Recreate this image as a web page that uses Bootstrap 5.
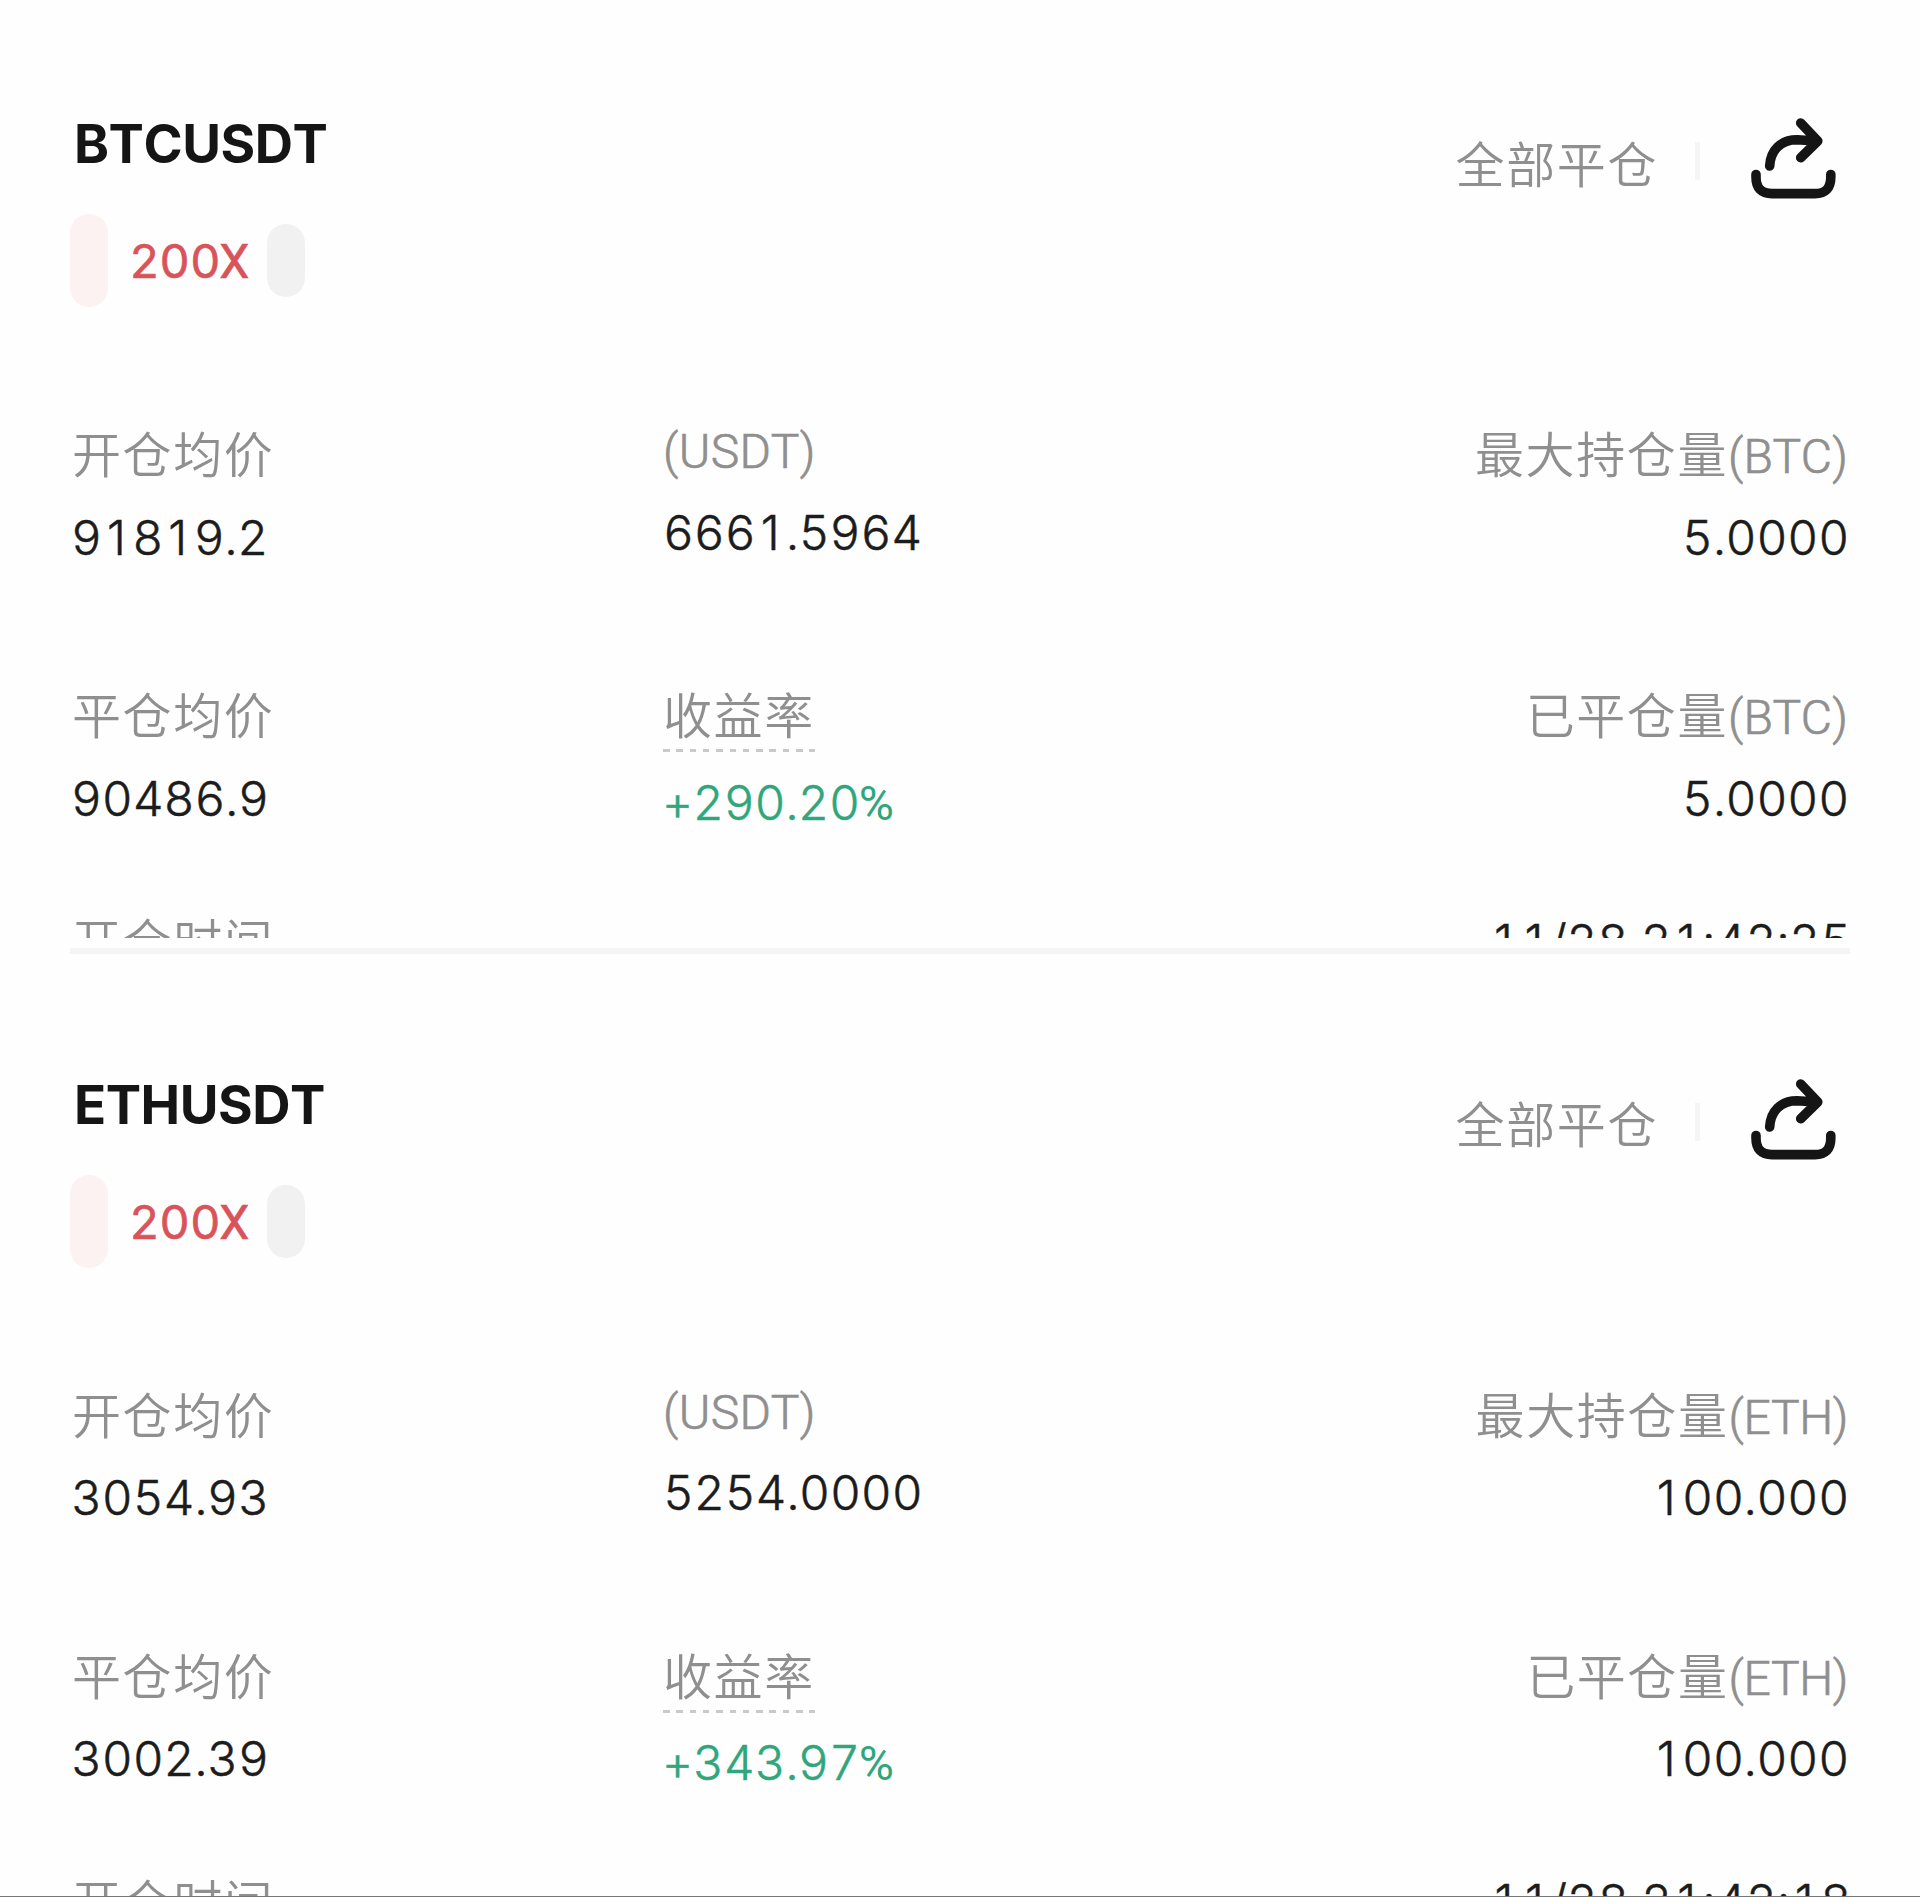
<!DOCTYPE html>
<html lang="zh-CN">
<head>
<meta charset="utf-8">
<meta name="viewport" content="width=device-width, initial-scale=1">
<title>BTCUSDT / ETHUSDT</title>
<link href="https://cdn.jsdelivr.net/npm/bootstrap@5.3.0/dist/css/bootstrap.min.css" rel="stylesheet">
<style>
body{background:#fefefe;font-family:Roboto,"Noto Sans CJK SC",sans-serif;font-size:48px;line-height:60px;color:#1c1c1c}
.screen{height:1897px;border-bottom:1px solid #777}
.position{height:960.5px;padding:0 70px}
.position-body{height:937.7px;padding-top:111px}
.head{height:309px}
.pair{font-family:Inter,sans-serif;font-size:53px;line-height:64px;font-weight:700;font-kerning:none;letter-spacing:-.5px;color:#151515;margin:1px 0 -1px 4px}
.tags{height:93px;margin-top:39px}
.pill-side{width:38px;height:93px;border-radius:19px;background:#fcf2f1}
.pill-mode{width:38px;height:73px;border-radius:19px;background:#f1f1f1}
.lever{width:158.5px;padding-left:22px;padding-top:2px;font-family:Inter,sans-serif;font-size:47px;font-weight:400;letter-spacing:1.1px;color:#d9545a;-webkit-text-stroke:.6px #d9545a}
.narrow{font-family:Roboto,sans-serif;font-size:48px;font-weight:400}
.lever .narrow{margin-left:-2px}
.cjk,.tag-label{color:#8f8f8f;font-weight:350}
.cjk{font-size:49px;letter-spacing:1.6px}
.tag-label{font-size:48px;font-weight:300;letter-spacing:.4px;-webkit-text-stroke:.7px #8f8f8f}
.cjk .tag-label{letter-spacing:.2px}
.eth .cjk .tag-label{letter-spacing:-.4px}
.head-right{padding-top:23px;height:83px}
.head-right .cjk{padding-top:5px}
.sep{width:5px;height:38px;background:#f5f5f5;margin:0 50px 6px 37px}
.share{width:88px;height:100px;margin-right:12px}
.details{height:261px;padding-top:7px}
.details-last{height:231px}
.c-left{width:593px;padding-left:2px}
.c-left .val{margin-left:-1px}
.c-mid{width:500px}
.val{margin-top:20.6px;font-family:Inter,sans-serif;font-feature-settings:"tnum" 1;font-weight:300;letter-spacing:-.2px;-webkit-text-stroke:.5px currentColor}
/* footless one, kept on the tabular pitch */
.one{display:inline-block;width:29px;margin-right:1.5px;text-align:center;font-feature-settings:"tnum" 0}
.c-right{margin-right:2px}
.c-right .val,.c-right.val{margin-right:-1px}
.dashed{width:152px;height:3px;margin-top:1.2px;background:repeating-linear-gradient(90deg,#c9c9c9 0 6.5px,transparent 6.5px 13.3px)}
.up{color:#2fa67b;margin-top:20.6px;margin-left:-1px}
.up .narrow{margin-left:-1px;-webkit-text-stroke:0}
.raised{margin-top:-5px}
.raised .val{margin-top:20.6px}
.times{padding-top:2px}
.times .val{margin-top:-2.5px}
.rule{height:5.5px;margin-top:10.5px;background:#f4f4f4}
</style>
</head>
<body>
<main class="screen overflow-hidden">
<section class="position">
  <div class="position-body overflow-hidden">
    <div class="head d-flex justify-content-between">
      <div>
        <div class="pair">BTCUSDT</div>
        <div class="tags d-flex align-items-center"><span class="pill-side"></span><span class="lever">200<span class="narrow">X</span></span><span class="pill-mode"></span></div>
      </div>
      <div class="head-right d-flex align-items-center">
        <span class="cjk">全部平仓</span><span class="sep"></span>
        <svg class="share" viewBox="1750 114 88 100" fill="none" stroke="#151515" stroke-width="9.6" stroke-linecap="round" stroke-linejoin="round"><path d="M1756 174.500V177Q1756 193.600 1772 193.600H1815Q1830.800 193.600 1830.800 177V174.500M1769.700 166C1770.500 150 1781 139.800 1797 139.800L1817 141M1800.700 123L1817.800 141L1800.700 157.700"/></svg>
      </div>
    </div>
    <div class="details d-flex">
      <div class="c-left"><div class="cjk">开仓均价</div><div class="val">9<span class="one">1</span>8<span class="one">1</span>9.2</div></div>
      <div class="c-mid raised"><div class="tag-label">(USDT)</div><div class="val">666<span class="one">1</span>.5964</div></div>
      <div class="c-right ms-auto text-end"><div class="cjk">最大持仓量<span class="tag-label">(BTC)</span></div><div class="val">5.0000</div></div>
    </div>
    <div class="details details-last d-flex">
      <div class="c-left"><div class="cjk">平仓均价</div><div class="val">90486.9</div></div>
      <div class="c-mid"><div class="cjk">收益率</div><div class="dashed"></div><div class="val up">+290.20<span class="narrow">%</span></div></div>
      <div class="c-right ms-auto text-end"><div class="cjk">已平仓量<span class="tag-label">(BTC)</span></div><div class="val">5.0000</div></div>
    </div>
    <div class="times d-flex justify-content-between">
      <div class="c-left cjk">开仓时间</div><div class="c-right val text-end"><span class="one">1</span><span class="one">1</span>/28 2<span class="one">1</span>:42:25</div>
    </div>
  </div>
  <div class="rule"></div>
</section>
<section class="position eth">
  <div class="position-body overflow-hidden">
    <div class="head d-flex justify-content-between">
      <div>
        <div class="pair">ETHUSDT</div>
        <div class="tags d-flex align-items-center"><span class="pill-side"></span><span class="lever">200<span class="narrow">X</span></span><span class="pill-mode"></span></div>
      </div>
      <div class="head-right d-flex align-items-center">
        <span class="cjk">全部平仓</span><span class="sep"></span>
        <svg class="share" viewBox="1750 114 88 100" fill="none" stroke="#151515" stroke-width="9.6" stroke-linecap="round" stroke-linejoin="round"><path d="M1756 174.500V177Q1756 193.600 1772 193.600H1815Q1830.800 193.600 1830.800 177V174.500M1769.700 166C1770.500 150 1781 139.800 1797 139.800L1817 141M1800.700 123L1817.800 141L1800.700 157.700"/></svg>
      </div>
    </div>
    <div class="details d-flex">
      <div class="c-left"><div class="cjk">开仓均价</div><div class="val">3054.93</div></div>
      <div class="c-mid raised"><div class="tag-label">(USDT)</div><div class="val">5254.0000</div></div>
      <div class="c-right ms-auto text-end"><div class="cjk">最大持仓量<span class="tag-label">(ETH)</span></div><div class="val"><span class="one">1</span>00.000</div></div>
    </div>
    <div class="details details-last d-flex">
      <div class="c-left"><div class="cjk">平仓均价</div><div class="val">3002.39</div></div>
      <div class="c-mid"><div class="cjk">收益率</div><div class="dashed"></div><div class="val up">+343.97<span class="narrow">%</span></div></div>
      <div class="c-right ms-auto text-end"><div class="cjk">已平仓量<span class="tag-label">(ETH)</span></div><div class="val"><span class="one">1</span>00.000</div></div>
    </div>
    <div class="times d-flex justify-content-between">
      <div class="c-left cjk">开仓时间</div><div class="c-right val text-end"><span class="one">1</span><span class="one">1</span>/28 2<span class="one">1</span>:42:<span class="one">1</span>8</div>
    </div>
  </div>
</section>
</main>
<script src="https://cdn.jsdelivr.net/npm/bootstrap@5.3.0/dist/js/bootstrap.bundle.min.js"></script>
</body>
</html>
